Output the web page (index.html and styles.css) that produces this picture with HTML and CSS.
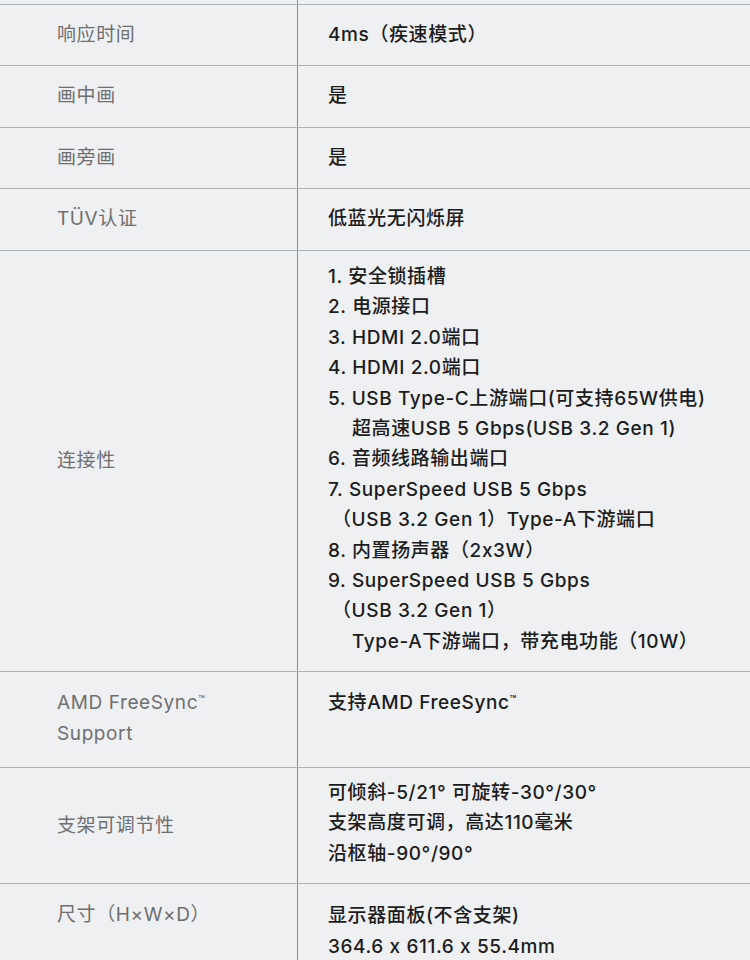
FILE: index.html
```html
<!DOCTYPE html>
<html lang="zh-CN">
<head>
<meta charset="utf-8">
<title>规格参数</title>
<link rel="stylesheet" href="styles.css">
</head>
<body>
<div class="spec">
  <div class="row stub"><div class="label"></div><div class="val"></div></div>
  <div class="row"><div class="label">响应时间</div><div class="val">4ms（疾速模式）</div></div>
  <div class="row"><div class="label">画中画</div><div class="val">是</div></div>
  <div class="row"><div class="label">画旁画</div><div class="val">是</div></div>
  <div class="row"><div class="label">TÜV认证</div><div class="val">低蓝光无闪烁屏</div></div>
  <div class="row row-ports">
    <div class="label">连接性</div>
    <div class="val">
      <div>1. 安全锁插槽</div>
      <div>2. 电源接口</div>
      <div>3. HDMI 2.0端口</div>
      <div>4. HDMI 2.0端口</div>
      <div>5. USB Type-C上游端口(可支持65W供电)</div>
      <div class="ind">超高速USB 5 Gbps(USB 3.2 Gen 1)</div>
      <div>6. 音频线路输出端口</div>
      <div>7. SuperSpeed USB 5 Gbps</div>
      <div class="ind-s">（USB 3.2 Gen 1）Type-A下游端口</div>
      <div>8. 内置扬声器（2x3W）</div>
      <div>9. SuperSpeed USB 5 Gbps</div>
      <div class="ind-s">（USB 3.2 Gen 1）</div>
      <div class="ind">Type-A下游端口，带充电功能（10W）</div>
    </div>
  </div>
  <div class="row row-amd">
    <div class="label">AMD FreeSync<span class="tm">™</span><br>Support</div>
    <div class="val">支持AMD FreeSync<span class="tm">™</span></div>
  </div>
  <div class="row row-stand">
    <div class="label">支架可调节性</div>
    <div class="val">
      <div>可倾斜-5/21° 可旋转-30°/30°</div>
      <div>支架高度可调，高达110毫米</div>
      <div>沿枢轴-90°/90°</div>
    </div>
  </div>
  <div class="row row-size">
    <div class="label">尺寸（H×W×D）</div>
    <div class="val">
      <div>显示器面板(不含支架)</div>
      <div>364.6 x 611.6 x 55.4mm</div>
    </div>
  </div>
</div>
</body>
</html>
```
FILE: styles.css
```css
html, body {
  margin: 0;
  padding: 0;
  background: #eef0f2;
}
.spec {
  width: 750px;
  font-family: "Inter", "Noto Sans CJK SC", sans-serif;
  font-size: 19px;
  letter-spacing: 0.6px;
}
.row {
  display: grid;
  grid-template-columns: 298px 1fr;
  border-bottom: 1px solid #aeb1b4;
}
.label {
  border-right: 1px solid #8c8c8c;
  display: flex;
  align-items: center;
  padding: 15.25px 20px 15.25px 57px;
  line-height: 30px;
  color: #6f6f6f;
  font-weight: 400;
}
.row-amd .label {
  display: block;
}
.val {
  padding: 15.25px 10px 15.25px 30px;
  line-height: 30px;
  color: #1c1c1c;
  font-weight: 500;
}
.tm {
  font-size: 11px;
  vertical-align: 6px;
  line-height: 0;
  letter-spacing: 0;
}
.stub {
  height: 3.5px;
}
.stub .label, .stub .val {
  padding: 0;
}
.row-ports .val {
  padding-top: 11.5px;
  padding-bottom: 14px;
  line-height: 30.4px;
}
.ind { padding-left: 24px; }
.ind-s { padding-left: 4px; }
.row-amd .label {
  line-height: 31px;
  padding-top: 15px;
  padding-bottom: 17.5px;
}
.row-stand .val {
  padding-top: 10px;
  padding-bottom: 14px;
  line-height: 30.5px;
}
.row-size .label {
  align-items: flex-start;
}
.row-size .val {
  line-height: 31px;
}
```
